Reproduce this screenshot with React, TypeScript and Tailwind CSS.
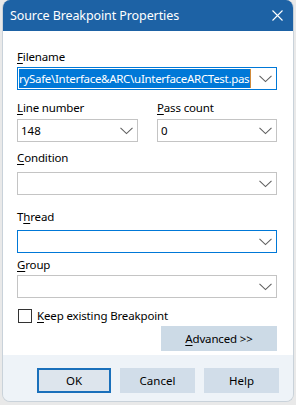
import React from "react";

const font = { fontFamily: '"Segoe UI", "Noto Sans", "Liberation Sans", sans-serif' };

function Chevron() {
  return (
    <svg width="13" height="8" viewBox="0 0 13 8" className="shrink-0">
      <path d="M0.5 0.8 L6.5 6.6 L12.5 0.8" fill="none" stroke="#606060" strokeWidth="1.1" />
    </svg>
  );
}

function Combo({
  children,
  focused,
  className = "",
}: {
  children?: React.ReactNode;
  focused?: boolean;
  className?: string;
}) {
  return (
    <div
      className={`h-[23px] flex items-center bg-white border ${
        focused ? "border-[#0078d7]" : "border-[#c4c4c4]"
      } ${className}`}
    >
      <div className="flex-1 min-w-0 h-full flex items-center overflow-hidden">{children}</div>
      <div className="w-[22px] h-full flex items-center justify-center">
        <Chevron />
      </div>
    </div>
  );
}

function Label({ pre = "", u, post }: { pre?: string; u: string; post: string }) {
  return (
    <div className="text-[11.5px] tracking-[-0.15px] leading-[16px] text-black whitespace-nowrap">
      {pre}
      <span className="underline underline-offset-2">{u}</span>
      {post}
    </div>
  );
}

export default function App() {
  return (
    <div className="w-[296px] h-[405px] bg-[#e9e9e9] overflow-hidden" style={font}>
      <div className="ml-[2px] w-[292px] h-[402px] flex flex-col rounded-[8px] overflow-hidden border border-[#c9d2da] border-t-0">
        {/* Title bar */}
        <div className="h-[31px] bg-[#1d62a5] flex items-center pl-[7px] pr-[10px] shrink-0">
          <div className="flex-1 text-white text-[12.5px] tracking-[-0.1px] leading-[16px] whitespace-nowrap">
            Source Breakpoint Properties
          </div>
          <svg width="11" height="11" viewBox="0 0 11 11">
            <path d="M0.5 0.5 L10.5 10.5 M10.5 0.5 L0.5 10.5" stroke="#ffffff" strokeWidth="1.1" />
          </svg>
        </div>

        {/* Body */}
        <div className="bg-white flex flex-col pl-[14px] pr-[16px] pt-[18px] pb-[4px]">
          <Label u="F" post="ilename" />
          <Combo className="mt-[2px]" focused>
            <div className="ml-[1px] shrink-0 h-[19px] flex items-center bg-[#0078d7] text-white text-[11.5px] tracking-[-0.3px] whitespace-nowrap pr-[1px]">
              rySafe\Interface&amp;ARC\uInterfaceARCTest.pas
            </div>
            <div className="w-[1px] h-[19px] shrink-0 bg-[#d08a3a]" />
          </Combo>

          <div className="flex gap-[19px] mt-[10px]">
            <div className="w-[121px] flex flex-col">
              <Label u="L" post="ine number" />
              <Combo className="mt-[3px]">
                <span className="pl-[3px] text-[11.5px] text-black">148</span>
              </Combo>
            </div>
            <div className="flex-1 flex flex-col">
              <Label u="P" post="ass count" />
              <Combo className="mt-[3px]">
                <span className="pl-[3px] text-[11.5px] text-black">0</span>
              </Combo>
            </div>
          </div>

          <div className="mt-[8px]">
            <Label u="C" post="ondition" />
          </div>
          <Combo className="mt-[6px]" />

          <div className="mt-[14px]">
            <Label pre="T" u="h" post="read" />
          </div>
          <Combo className="mt-[5px]" focused />

          <div className="mt-[4px]">
            <Label u="G" post="roup" />
          </div>
          <Combo className="mt-[2px]" />

          <div className="flex items-center mt-[10px] h-[16px]">
            <div className="w-[14px] h-[14px] border border-[#333333] bg-white ml-[1px]" />
            <div className="ml-[5px]">
              <Label u="K" post="eep existing Breakpoint" />
            </div>
          </div>

          <div className="flex justify-end mt-[2px]">
            <div className="w-[116px] h-[25px] bg-[#ccdae6] flex items-center justify-center">
              <Label u="A" post="dvanced >>" />
            </div>
          </div>
        </div>

        {/* Footer */}
        <div className="flex-1 bg-[#eef3f8] flex justify-end items-start pt-[13px] pr-[14px] gap-[9px]">
          <div className="w-[74px] h-[25px] border-2 border-[#1a70bb] bg-[#dde5ed] flex items-center justify-center text-[11.5px] text-black">
            OK
          </div>
          <div className="w-[75px] h-[25px] bg-[#d1dde9] flex items-center justify-center text-[11.5px] text-black">
            Cancel
          </div>
          <div className="w-[75px] h-[25px] bg-[#d1dde9] flex items-center justify-center text-[11.5px] text-black">
            Help
          </div>
        </div>
      </div>
    </div>
  );
}
